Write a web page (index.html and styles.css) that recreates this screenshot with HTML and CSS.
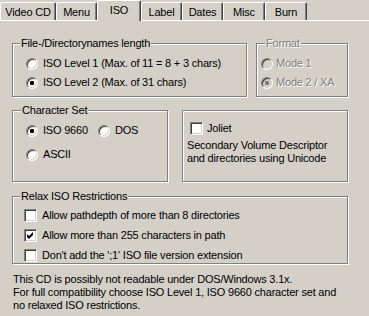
FILE: index.html
```html
<!DOCTYPE html>
<html lang="en">
<head>
<meta charset="UTF-8">
<title>ISO</title>
<link rel="stylesheet" href="styles.css">
</head>
<body>
<div class="tabs">
    <div class="tab tab-video">Video CD</div>
    <div class="tab tab-menu">Menu</div>
    <div class="tab tab-iso active">ISO</div>
    <div class="tab tab-label">Label</div>
    <div class="tab tab-dates">Dates</div>
    <div class="tab tab-misc">Misc</div>
    <div class="tab tab-burn">Burn</div>
</div>
<div class="panel">
    <div class="row row-top">
        <div class="group group-names">
            <div class="group-title">File-/Directorynames length</div>
            <div class="option"><span class="radio"></span>ISO Level 1 (Max. of 11 = 8 + 3 chars)</div>
            <div class="option"><span class="radio checked"></span>ISO Level 2 (Max. of 31 chars)</div>
        </div>
        <div class="group group-format disabled">
            <div class="group-title">Format</div>
            <div class="option"><span class="radio"></span>Mode 1</div>
            <div class="option"><span class="radio checked"></span>Mode 2 / XA</div>
        </div>
    </div>
    <div class="row row-middle">
        <div class="group group-charset">
            <div class="group-title">Character Set</div>
            <div class="option-line">
                <div class="option option-iso"><span class="radio checked"></span>ISO 9660</div>
                <div class="option"><span class="radio"></span>DOS</div>
            </div>
            <div class="option option-ascii"><span class="radio"></span>ASCII</div>
        </div>
        <div class="group group-joliet">
            <div class="option option-joliet"><span class="check"></span>Joliet</div>
            <div class="joliet-text">Secondary Volume Descriptor<br>and directories using Unicode</div>
        </div>
    </div>
    <div class="group group-relax">
        <div class="group-title">Relax ISO Restrictions</div>
        <div class="option option-tall"><span class="check"></span>Allow pathdepth of more than 8 directories</div>
        <div class="option option-tall"><span class="check checked"><svg width="13" height="13" viewBox="0 0 13 13"><polygon points="3,5 5,7 9,3 9,6 5,10 3,8" fill="#000"/></svg></span>Allow more than 255 characters in path</div>
        <div class="option option-tall"><span class="check"></span>Don't add the ';1' ISO file version extension</div>
    </div>
    <p class="note">This CD is possibly not readable under DOS/Windows 3.1x.<br>For full compatibility choose ISO Level 1, ISO 9660 character set and<br>no relaxed ISO restrictions.</p>
</div>
</body>
</html>
```

FILE: styles.css
```css
body {
    margin: 0;
    background-color: #d4d0c8;
    font-family: "Liberation Sans", Arial, sans-serif;
    font-size: 11px;
    letter-spacing: -0.2px;
    line-height: 13px;
    color: #000;
    white-space: nowrap;
}
.tabs {
    display: flex;
    align-items: flex-end;
    height: 21px;
    box-sizing: border-box;
    border-bottom: 1px solid #fff;
}
.tab {
    height: 18px;
    box-sizing: border-box;
    padding-top: 3px;
    text-align: center;
    background-color: #d4d0c8;
    border-left: 1px solid #fff;
    border-top: 1px solid #fff;
    border-right: 1px solid #404040;
    border-radius: 2px 2px 0 0;
    box-shadow: inset -1px 0 0 #808080;
}
.tab.active {
    height: 21px;
    margin-bottom: -1px;
}
.tab-video { width: 56px; }
.tab-menu { width: 41px; }
.tab-iso { width: 44px; }
.tab-label { width: 41px; }
.tab-dates { width: 41px; }
.tab-misc { width: 42px; }
.tab-burn { width: 42px; }
.panel {
    padding-left: 12px;
}
.row {
    display: flex;
}
.row-top {
    margin-top: 22px;
    gap: 9px;
}
.row-middle {
    margin-top: 13px;
    gap: 14px;
}
.group {
    box-sizing: border-box;
    border: 1px solid #808080;
    box-shadow: inset 1px 1px 0 #fff, 1px 1px 0 #fff;
}
.group-title {
    width: max-content;
    margin-top: -7px;
    margin-bottom: 4px;
    padding: 0 1px;
    background-color: #d4d0c8;
}
.group-names {
    width: 235px;
    height: 54px;
    padding-left: 13px;
}
.group-names .group-title {
    margin-left: -6px;
}
.group-format {
    width: 92px;
    height: 54px;
    padding-left: 4px;
}
.group-format .group-title {
    margin-left: 4px;
}
.group-format .radio {
    margin-right: 3px;
}
.group-charset {
    width: 156px;
    height: 72px;
    padding-left: 13px;
}
.group-charset .group-title {
    margin-left: -5px;
}
.group-joliet {
    width: 166px;
    height: 72px;
    padding: 8px 0 0 4px;
}
.group-relax {
    width: 336px;
    height: 68px;
    margin-top: 14px;
    padding-left: 11px;
}
.group-relax .group-title {
    margin-left: -4px;
    margin-bottom: 2px;
}
.option-line {
    display: flex;
}
.option {
    display: flex;
    align-items: center;
    height: 19px;
}
.option-tall {
    height: 20px;
}
.option-iso {
    width: 72px;
}
.option-ascii {
    margin-top: 5px;
}
.option-joliet {
    padding-left: 3px;
}
.joliet-text {
    margin-top: 1px;
}
.radio {
    position: relative;
    flex: none;
    width: 12px;
    height: 12px;
    box-sizing: border-box;
    margin-right: 5px;
    border-radius: 50%;
    border: 1px solid;
    border-color: #808080 #fff #fff #808080;
    background-color: #fff;
    box-shadow: inset 1px 1px 0 #404040, inset -1px -1px 0 #d4d0c8;
}
.radio.checked::after {
    content: "";
    position: absolute;
    left: 3px;
    top: 3px;
    width: 4px;
    height: 4px;
    border-radius: 1px;
    background-color: #000;
}
.check {
    flex: none;
    width: 13px;
    height: 13px;
    box-sizing: border-box;
    margin-right: 5px;
    border: 1px solid;
    border-color: #808080 #fff #fff #808080;
    background-color: #fff;
    box-shadow: inset 1px 1px 0 #404040, inset -1px -1px 0 #d4d0c8;
}
.check svg {
    display: block;
    margin: -1px 0 0 -1px;
}
.option-joliet .check {
    margin-right: 4px;
}
.disabled .option {
    color: #808080;
    text-shadow: 1px 1px 0 #fff;
}
.disabled .group-title {
    color: #808080;
    text-shadow: 1px 1px 0 #fff;
}
.disabled .radio {
    background-color: #d4d0c8;
}
.disabled .radio.checked::after {
    background-color: #808080;
}
.note {
    margin: 9px 0 0 1px;
}
```
